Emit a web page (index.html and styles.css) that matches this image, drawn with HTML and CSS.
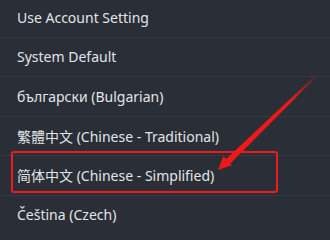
FILE: index.html
```html
<!DOCTYPE html>
<html>
<head>
<meta charset="utf-8">
<link rel="stylesheet" href="styles.css">
</head>
<body>
<div class="menu">
  <div class="item">Use Account Setting</div>
  <div class="item">System Default</div>
  <div class="item">български (Bulgarian)</div>
  <div class="item">繁體中文 (Chinese - Traditional)</div>
  <div class="item">简体中文 (Chinese - Simplified)</div>
  <div class="item">Čeština (Czech)</div>
</div>
<div class="highlight"></div>
<svg class="arrow" width="330" height="224" viewBox="0 0 330 224">
  <defs>
    <linearGradient id="fade" x1="316" y1="76" x2="218" y2="169" gradientUnits="userSpaceOnUse">
      <stop offset="0" stop-color="#f21818" stop-opacity="0.1"/>
      <stop offset="0.3" stop-color="#f21818" stop-opacity="1"/>
      <stop offset="1" stop-color="#f21818"/>
    </linearGradient>
  </defs>
  <path d="M316 76 L225.5 161 L228.5 164 Z" fill="url(#fade)" stroke="url(#fade)" stroke-width="1.8" stroke-linejoin="round"/>
  <path d="M218.5 169.5 L223.5 156.5 L231.5 165 Z" fill="#f21818" stroke="#f21818" stroke-width="0.6" stroke-linejoin="round"/>
</svg>
</body>
</html>
```
FILE: styles.css
```css
html, body {
  margin: 0;
  padding: 0;
  background: #2a2e36;
  width: 330px;
  height: 224px;
  overflow: hidden;
}
.menu {
  margin-top: -2px;
  display: flex;
  flex-direction: column;
}
.item {
  height: 39.5px;
  box-sizing: border-box;
  border-bottom: 1px solid #343842;
  display: flex;
  align-items: center;
  padding-left: 17px;
  font-family: "Noto Sans", "Noto Sans CJK SC", sans-serif;
  font-size: 14px;
  color: #e2e5e8;
  white-space: nowrap;
}
.highlight {
  position: absolute;
  left: 11px;
  top: 150.5px;
  width: 267px;
  height: 42px;
  box-sizing: border-box;
  border: 2.5px solid #ee1a1c;
  border-radius: 3px;
}
.arrow {
  position: absolute;
  left: 0;
  top: 0;
}
```
